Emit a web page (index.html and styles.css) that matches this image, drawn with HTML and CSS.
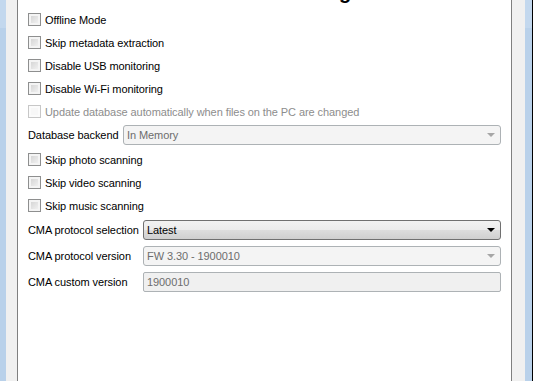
FILE: index.html
```html
<!DOCTYPE html>
<html lang="en">
<head>
  <meta charset="UTF-8" />
  <title>QCMA Settings</title>
  <link rel="stylesheet" href="styles.css">
</head>
<body>
  <div class="frame-edge"></div>
  <div class="frame-pad left"></div>
  <div class="content">
    <h1 class="title">Settings</h1>

    <label class="check-row"><span class="box"></span>Offline Mode</label>
    <label class="check-row"><span class="box"></span>Skip metadata extraction</label>
    <label class="check-row"><span class="box"></span>Disable USB monitoring</label>
    <label class="check-row"><span class="box"></span>Disable Wi-Fi monitoring</label>
    <label class="check-row disabled"><span class="box"></span>Update database automatically when files on the PC are changed</label>

    <div class="field-row db-row">
      <span class="field-label db-label">Database backend</span>
      <div class="combo disabled"><span class="combo-text">In Memory</span><span class="arrow"></span></div>
    </div>

    <label class="check-row"><span class="box"></span>Skip photo scanning</label>
    <label class="check-row"><span class="box"></span>Skip video scanning</label>
    <label class="check-row"><span class="box"></span>Skip music scanning</label>

    <div class="cma-group">
      <div class="field-row">
        <span class="field-label">CMA protocol selection</span>
        <div class="combo"><span class="combo-text">Latest</span><span class="arrow"></span></div>
      </div>
      <div class="field-row">
        <span class="field-label">CMA protocol version</span>
        <div class="combo disabled"><span class="combo-text">FW 3.30 - 1900010</span><span class="arrow"></span></div>
      </div>
      <div class="field-row">
        <span class="field-label">CMA custom version</span>
        <div class="text-input disabled">1900010</div>
      </div>
    </div>
  </div>
  <div class="frame-pad right"></div>
  <div class="frame-edge right-edge"></div>
  <div class="frame-shadow"></div>
</body>
</html>
```

FILE: styles.css
```css
/* Base reset */
* { box-sizing: border-box; margin: 0; padding: 0; }
body {
  font-family: "Liberation Sans", Arial, sans-serif;
  font-size: 11px;
  letter-spacing: -0.08px;
  color: #000;
  width: 533px;
  height: 381px;
  overflow: hidden;
  display: flex;
  background: #f0f0f0;
}
/* Window frame */
.frame-edge {
  width: 6px;
  background: linear-gradient(#c3d8ee 0, #c3d8ee 28px, #b9d1ea 28px);
}
.frame-edge.right-edge { width: 7px; }
.frame-shadow { width: 1px; background: #000; }
.frame-pad { background: #f0f0f0; }
.frame-pad.left { width: 12px; border-right: 1px solid #7f7f7f; }
.frame-pad.right { width: 13px; }
.content {
  width: 494px;
  background: #fff;
  border-right: 1px solid #7f7f7f;
  padding: 0 10px;
  overflow: hidden;
}
.title {
  height: 24px;
  margin: -20px 0 4px 256px;
  font-size: 20px;
  line-height: 24px;
  font-weight: bold;
  white-space: nowrap;
}
/* Checkboxes */
.check-row {
  display: flex;
  align-items: center;
  height: 23px;
  white-space: nowrap;
}
.box {
  width: 13px; height: 13px;
  margin-right: 4px;
  border: 1px solid #8e8f8f;
  background: linear-gradient(135deg, #cfcfcf, #f7f7f7);
  box-shadow: inset 0 0 0 2px #f4f4f4;
}
.check-row.disabled { color: #8d8d8d; }
.check-row.disabled .box {
  border-color: #c7c7c7;
  background: #f7f7f7;
  box-shadow: inset 0 0 0 2px #fbfbfb;
}
/* Combo rows */
.field-row {
  display: flex;
  align-items: center;
  height: 20px;
}
.db-row { margin: 2px 0 3px; }
.cma-group { display: flex; flex-direction: column; gap: 6px; margin-top: 3px; }
.field-label { width: 115px; flex-shrink: 0; white-space: nowrap; }
.field-label.db-label { width: 95px; }
.combo, .text-input {
  flex: 1;
  height: 20px;
  display: flex;
  align-items: center;
  padding-left: 3px;
  border: 1px solid #707070;
  border-radius: 3px;
  background: linear-gradient(#f2f2f2 0, #ebebeb 50%, #dddddd 50%, #cfcfcf 100%);
}
.combo-text { flex: 1; }
.arrow {
  width: 0; height: 0;
  margin-right: 5px;
  border-left: 4px solid transparent;
  border-right: 4px solid transparent;
  border-top: 4px solid #000;
}
.combo.disabled, .text-input.disabled {
  border-color: #adb2b5;
  background: #f4f4f4;
  color: #6d6d6d;
}
.text-input.disabled { background: #f0f0f0; border-radius: 2px; }
.combo.disabled .arrow { border-top-color: #a6a6a6; }
```
